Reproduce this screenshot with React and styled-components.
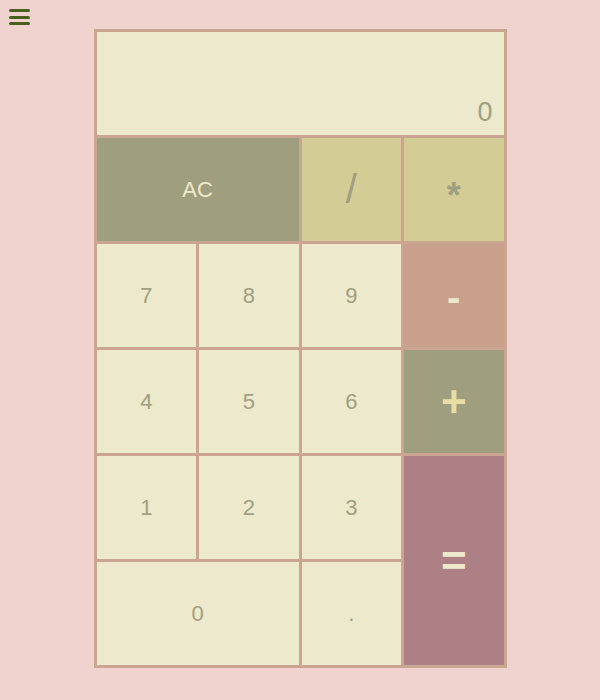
import React, { useState } from "react";
import styled, { createGlobalStyle } from "styled-components";

const GlobalStyle = createGlobalStyle`
  body {
    margin: 0;
    background: #f0d3cf;
    font-family: "Liberation Sans", Arial, sans-serif;
  }
`;

const Page = styled.div`
  width: 600px;
  height: 700px;
  position: relative;
  display: flex;
  flex-direction: column;
  align-items: center;
  padding-top: 29px;
  box-sizing: border-box;
`;

const MenuButton = styled.button`
  position: absolute;
  top: 9px;
  left: 9px;
  width: 21px;
  height: 16px;
  padding: 0;
  border: none;
  background: transparent;
  display: flex;
  flex-direction: column;
  justify-content: space-between;
  cursor: pointer;
  span {
    display: block;
    height: 3px;
    border-radius: 2px;
    background: #46601e;
  }
`;

const Calculator = styled.div`
  width: 413px;
  height: 639px;
  box-sizing: border-box;
  border: 3px solid #caa592;
  background: #caa592;
  display: grid;
  grid-template-columns: repeat(4, 1fr);
  grid-template-rows: repeat(6, 1fr);
  gap: 3px;
`;

const Display = styled.div`
  grid-column: 1 / span 4;
  background: #ede9cc;
  color: #a09f80;
  font-size: 27px;
  display: flex;
  align-items: flex-end;
  justify-content: flex-end;
  padding: 0 11px 7px 0;
`;

const palette = {
  digit: { bg: "#ede9cc", fg: "#a09f80" },
  clear: { bg: "#9f9f80", fg: "#ede9cc" },
  op: { bg: "#d3cc95", fg: "#a09f80" },
  minus: { bg: "#c9a08c", fg: "#ede9cc" },
  plus: { bg: "#9f9f80", fg: "#e6dea4" },
  equals: { bg: "#ad8086", fg: "#ede9cc" },
};

const Key = styled.button`
  border: none;
  padding: ${(p) => p.$drop || 0}px 0 0;
  margin: 0;
  font-family: inherit;
  background: ${(p) => palette[p.$kind].bg};
  color: ${(p) => palette[p.$kind].fg};
  font-size: ${(p) => p.$size || 22}px;
  font-weight: ${(p) => (p.$bold ? 700 : 400)};
  grid-column: span ${(p) => p.$cols || 1};
  grid-row: span ${(p) => p.$rows || 1};
  display: flex;
  align-items: center;
  justify-content: center;
  cursor: pointer;
`;

const keys = [
  { label: "AC", kind: "clear", cols: 2 },
  { label: "/", kind: "op", size: 40 },
  { label: "*", kind: "op", size: 36, bold: true, drop: 12 },
  { label: "7", kind: "digit" },
  { label: "8", kind: "digit" },
  { label: "9", kind: "digit" },
  { label: "-", kind: "minus", size: 40, bold: true, drop: 4 },
  { label: "4", kind: "digit" },
  { label: "5", kind: "digit" },
  { label: "6", kind: "digit" },
  { label: "+", kind: "plus", size: 44, bold: true },
  { label: "1", kind: "digit" },
  { label: "2", kind: "digit" },
  { label: "3", kind: "digit" },
  { label: "=", kind: "equals", rows: 2, size: 44, bold: true },
  { label: "0", kind: "digit", cols: 2 },
  { label: ".", kind: "digit" },
];

export default function App() {
  const [value] = useState("0");
  return (
    <>
      <GlobalStyle />
      <Page>
        <MenuButton aria-label="menu">
          <span />
          <span />
          <span />
        </MenuButton>
        <Calculator>
          <Display>{value}</Display>
          {keys.map((k) => (
            <Key
              key={k.label}
              $kind={k.kind}
              $cols={k.cols}
              $rows={k.rows}
              $size={k.size}
              $bold={k.bold}
              $drop={k.drop}
            >
              {k.label}
            </Key>
          ))}
        </Calculator>
      </Page>
    </>
  );
}
